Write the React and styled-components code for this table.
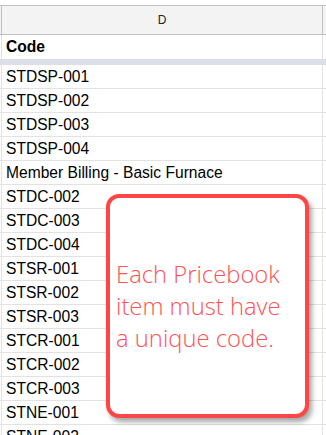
import React from "react";
import styled, { createGlobalStyle } from "styled-components";

const Global = createGlobalStyle`
  html, body { margin: 0; padding: 0; background: #fff; }
  body { font-family: "Liberation Sans", Arial, sans-serif; }
`;

const Sheet = styled.div`
  position: relative;
  width: 326px;
  height: 435px;
  overflow: hidden;
  padding-top: 5px;
  box-sizing: border-box;
  background: #fff;
`;

const Row = styled.div`
  display: grid;
  grid-template-columns: 2px 1fr 3px;
  height: ${(p) => p.$h}px;
  box-sizing: border-box;
  border-bottom: ${(p) =>
    p.$open ? "none" : `1px solid ${p.$head ? "#c0c0c0" : "#e2e2e2"}`};
  border-top: ${(p) => (p.$head ? "1px solid #c0c0c0" : "none")};
  background: ${(p) => (p.$head ? "#f3f3f3" : "#fff")};
`;

const Side = styled.div`
  border-right: 1px solid ${(p) => (p.$head ? "#c0c0c0" : "#e2e2e2")};
`;

const Cell = styled.div`
  display: flex;
  align-items: center;
  justify-content: ${(p) => (p.$head ? "center" : "flex-start")};
  padding-left: ${(p) => (p.$head ? 0 : 4)}px;
  border-right: 1px solid ${(p) => (p.$head ? "#c0c0c0" : "#e2e2e2")};
  font-size: ${(p) => (p.$head ? "12px" : "15.6px")};
  font-weight: ${(p) => (p.$bold ? 700 : 400)};
  color: ${(p) => (p.$head ? "#222" : "#000")};
  white-space: nowrap;
  overflow: hidden;
`;

const Freeze = styled.div`
  height: 6px;
  background: #dcdfe8;
`;

const Callout = styled.div`
  position: absolute;
  left: 106px;
  top: 194px;
  width: 203px;
  height: 224px;
  box-sizing: border-box;
  border: 4px solid #ff4545;
  border-radius: 13px;
  background: #fff;
  box-shadow: 3px 4px 5px rgba(0, 0, 0, 0.35);
  display: flex;
  align-items: center;
  padding-left: 6px;
`;

const Note = styled.p`
  margin: 0;
  font-family: "Open Sans", "Noto Sans", sans-serif;
  font-weight: 300;
  font-size: 23.8px;
  line-height: 32px;
  color: #ff5252;
`;

const codes = [
  "STDSP-001",
  "STDSP-002",
  "STDSP-003",
  "STDSP-004",
  "Member Billing - Basic Furnace",
  "STDC-002",
  "STDC-003",
  "STDC-004",
  "STSR-001",
  "STSR-002",
  "STSR-003",
  "STCR-001",
  "STCR-002",
  "STCR-003",
  "STNE-001",
  "STNE-002",
];

export default function App() {
  return (
    <>
      <Global />
      <Sheet>
        <Row $head $h={30}>
          <Side $head />
          <Cell $head>D</Cell>
          <div />
        </Row>
        <Row $open $h={24}>
          <Side />
          <Cell $bold>Code</Cell>
          <div />
        </Row>
        <Freeze />
        {codes.map((c) => (
          <Row key={c} $h={24}>
            <Side />
            <Cell>{c}</Cell>
            <div />
          </Row>
        ))}
        <Callout>
          <Note>
            Each Pricebook
            <br />
            item must have
            <br />a unique code.
          </Note>
        </Callout>
      </Sheet>
    </>
  );
}
